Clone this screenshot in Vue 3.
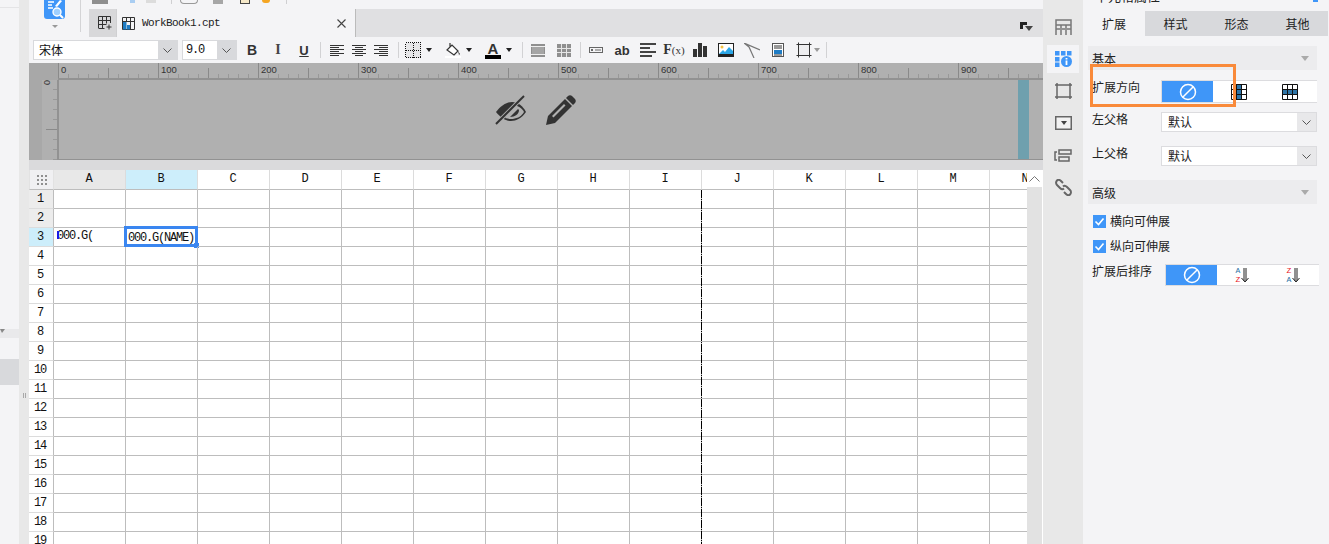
<template>
  <div class="app">
    <aside class="left-panel">
      <div class="left-top"></div>
      <div class="left-drop"><i class="left-caret"></i></div>
      <div class="left-selected"></div>
    </aside>
    <div class="splitter"><span class="grip"></span></div>

    <main class="center">
      <div class="head">
        <div class="logo-col">
          <div class="logo">
            <svg width="21" height="19" viewBox="0 0 21 19">
              <path d="M4 2h6M4 5h4M4 8h5" stroke="#fff" stroke-width="1.6" />
              <path d="M11 6l5-6 2 1-5 6z" fill="#fff" />
              <circle cx="13" cy="12" r="4" fill="#9fd0ff" stroke="#fff" stroke-width="1.4" />
              <path d="M16 15l3 3" stroke="#fff" stroke-width="2" />
            </svg>
          </div>
          <i class="logo-caret"></i>
        </div>
        <div class="head-right">
          <div class="quick">
            <i class="q q-gray"></i>
            <i class="q q-blue"></i>
            <i class="q q-light"></i>
            <i class="q-sep q-sep-a"></i>
            <i class="q q-rings"></i>
            <i class="q q-gray2"></i>
            <i class="q q-beige"></i>
            <i class="q q-orange"></i>
            <i class="q-sep q-sep-b"></i>
          </div>
          <div class="tabs">
            <div class="tab-add">
              <svg width="14" height="14" viewBox="0 0 14 14" fill="none" stroke="#333">
                <path d="M.5 12V.5h12V7M.5 4.500h12M.5 8.500h8M4.500.5v12M8.500.5v7M.5 12.500h6M11 8.500v5M8.500 11h5" />
              </svg>
            </div>
            <div class="tab-file">
              <svg width="13" height="13" viewBox="0 0 13 13" fill="none" stroke="#333">
                <path d="M.5.5h12v12H.5zM.5 4.500h12M8.500.5v12M4.500.5v4" />
                <path d="M1 5h3.500v7.500H1zM5 8h3v4.500H5z" fill="#1f7cc4" stroke="none" />
              </svg>
              <span class="file-name">WorkBook1.cpt</span>
              <span class="file-close">
                <svg width="9" height="9" viewBox="0 0 9 9" stroke="#444" stroke-width="1.100"><path d="M.5.5l8 8M8.500.5l-8 8" /></svg>
              </span>
            </div>
            <div class="tab-spacer"></div>
            <div class="tab-menu">
              <svg width="13" height="10" viewBox="0 0 13 10">
                <path d="M0 0h7v3H3v4H0z" fill="#222" />
                <path d="M5 4h8l-4 5z" fill="#444" />
              </svg>
            </div>
          </div>
        </div>
      </div>

      <div class="toolbar">
        <div class="combo combo-font"><span class="combo-text">宋体</span><span class="combo-arrow"><svg width="9" height="5" viewBox="0 0 9 5" fill="none" stroke="#555"><path d="M.5.500l4 4 4-4" /></svg></span></div>
        <div class="combo combo-size"><span class="combo-text size-text">9.0</span><span class="combo-arrow"><svg width="9" height="5" viewBox="0 0 9 5" fill="none" stroke="#555"><path d="M.5.500l4 4 4-4" /></svg></span></div>

        <div class="t26 first"><b class="t-b">B</b></div>
        <div class="t26"><i class="t-i">I</i></div>
        <div class="t26"><span class="t-u">U</span></div>
        <i class="sep sep-align"></i>
        <div class="t22"><svg width="14" height="11" viewBox="0 0 14 11" stroke="#333"><path d="M0 .5h14M0 2.500h9M0 4.500h14M0 6.500h9M0 8.500h14M0 10.500h9" /></svg></div>
        <div class="t22"><svg width="14" height="11" viewBox="0 0 14 11" stroke="#333"><path d="M0 .5h14M3 2.500h8M0 4.500h14M3 6.500h8M0 8.500h14M3 10.500h8" /></svg></div>
        <div class="t22"><svg width="14" height="11" viewBox="0 0 14 11" stroke="#333"><path d="M0 .5h14M5 2.500h9M0 4.500h14M5 6.500h9M0 8.500h14M5 10.500h9" /></svg></div>
        <i class="sep sep-border"></i>
        <div class="t40">
          <svg width="16" height="16" viewBox="0 0 16 16" fill="none" stroke="#111" stroke-dasharray="1 1" shape-rendering="crispEdges"><rect x=".5" y=".5" width="15" height="15" fill="#e6e6e8" /><path d="M8.500.5v15M.5 8.500h15" /></svg>
          <i class="caret"></i>
        </div>
        <div class="t40">
          <svg width="16" height="16" viewBox="0 0 16 16">
            <path d="M5 1v4M2 8l5-5 6 6-4 4z" fill="#fff" stroke="#333" stroke-width="1.200" />
            <path d="M13 9l2 3-1 1z" fill="#333" />
            <rect x="0" y="14" width="16" height="2" fill="#fff" />
          </svg>
          <i class="caret"></i>
        </div>
        <div class="t40">
          <span class="color-a">A</span>
          <i class="caret"></i>
        </div>
        <i class="sep sep-merge"></i>
        <div class="t26">
          <svg width="14" height="13" viewBox="0 0 14 13"><rect width="14" height="13" fill="#8f8f8f" /><rect x="1" y="3" width="12" height="7" fill="#a5a5a5" /><path d="M0 2.500h14M0 10.500h14" stroke="#eee" /></svg>
        </div>
        <div class="t26">
          <svg width="14" height="13" viewBox="0 0 14 13"><rect width="14" height="13" fill="#8f8f8f" /><path d="M0 4.500h14M0 8.500h14M4.500 0v13M9.500 0v13" stroke="#e6e6e6" /></svg>
        </div>
        <i class="sep sep-insert"></i>
        <div class="t26">
          <svg width="14" height="6" viewBox="0 0 14 6" fill="none" stroke="#666"><rect x=".5" y=".5" width="13" height="5" /><rect x="2" y="2" width="2" height="2" fill="#666" stroke="none" /><path d="M6 3h6" /></svg>
        </div>
        <div class="t26"><span class="t-ab">ab</span></div>
        <div class="t26">
          <svg width="16" height="14" viewBox="0 0 16 14" stroke="#444" stroke-width="2"><path d="M0 1h16M0 5h10M0 9h16M0 13h12" /></svg>
        </div>
        <div class="t26"><span class="t-fx">F<small>(x)</small></span></div>
        <div class="t26">
          <svg width="14" height="14" viewBox="0 0 14 14" fill="#333"><rect y="6" width="4" height="8" /><rect x="5" width="4" height="14" /><rect x="10" y="3" width="4" height="11" /></svg>
        </div>
        <div class="t26">
          <svg width="16" height="14" viewBox="0 0 16 14">
            <rect x=".5" y=".5" width="15" height="13" fill="#fff" stroke="#222" />
            <rect y="11" width="16" height="3" fill="#222" />
            <circle cx="4" cy="4" r="1.500" fill="#f5c242" />
            <path d="M1 11l4-4 2 2 4-5 4 4v3z" fill="#2ba6e6" />
          </svg>
        </div>
        <div class="t26">
          <svg width="16" height="15" viewBox="0 0 16 15" fill="none" stroke="#777" stroke-width="1.200"><path d="M0 0l16 7M0 0l5 4 5 11" /></svg>
        </div>
        <div class="t26">
          <svg width="12" height="14" viewBox="0 0 12 14">
            <rect x=".5" y=".5" width="11" height="13" fill="#fff" stroke="#555" />
            <path d="M2 3h8M2 5h8" stroke="#333" />
            <rect x="2" y="7" width="8" height="4" fill="#1f7cc4" />
            <path d="M2 12h8" stroke="#333" />
          </svg>
        </div>
        <div class="t35">
          <svg width="16" height="16" viewBox="0 0 16 16" fill="#ededef" stroke="#333"><path d="M2.500 2.500h11v11h-11z" /><path d="M.5 2.500h15M.5 13.500h15M2.500.5v15M13.500.5v15" fill="none" /></svg>
          <i class="caret caret-gray"></i>
        </div>
        <i class="sep"></i>
      </div>

      <section class="ruler">
        <div class="ruler-top">
          <div class="ruler-corner"></div>
          <div class="ruler-h">
            <span v-for="n in rulerLabels" :key="n" class="ruler-num">{{ n }}</span>
          </div>
        </div>
        <div class="ruler-body">
          <div class="ruler-side"></div>
          <div class="ruler-v"><span class="ruler-zero">0</span></div>
          <div class="ruler-canvas">
            <svg class="eye" width="32" height="30" viewBox="1 0 30 30">
              <path d="M1 17C6 10 12 7 17 7c6 0 11 4 14 10-4 6-10 9-15 9-6 0-11-4-15-9z" fill="#333" />
              <path d="M18 10c4 0 9 3 11 7-3 5-8 7-13 7-2 0-4-.5-6-1z" fill="#b0b0b0" />
              <path d="M24 15c0 4-4 7-9 7l8-8z" fill="#333" />
              <path d="M1 29L29 1" stroke="#b0b0b0" stroke-width="4" />
              <path d="M1 29L29 1" stroke="#333" stroke-width="2" />
            </svg>
            <svg class="pencil" width="30" height="30" viewBox="0 0 30 30" fill="#333">
              <path d="M0 30l2-9L19 4l7 7L9 28z" />
              <path d="M20 3l2-2c1-1 3-1 4 0l3 3c1 1 1 3 0 4l-2 2z" />
              <path d="M6 21l12-12 1.500 1.500-12 12z" fill="#b0b0b0" />
            </svg>
          </div>
          <div class="teal"></div>
        </div>
      </section>

      <div class="gap-bar"></div>

      <section class="sheet">
        <div class="grid-wrap">
          <div class="grid">
            <div class="corner"><i class="dots"></i></div>
            <div
              v-for="c in cols"
              :key="c"
              class="col-head"
              :class="{ 'col-a': c === 'A', 'col-b': c === 'B' }"
            >{{ c }}</div>
            <template v-for="r in 19" :key="r">
              <div class="row-head" :class="{ 'row-gray': r < 3, 'row-sel': r === 3 }">{{ r }}</div>
              <div v-for="c in cols" :key="c + r" class="cell">
                <template v-if="r === 3 && c === 'A'">
                  <span class="cell-text a3">000.G(</span>
                  <i class="drag-mark"></i>
                </template>
                <template v-if="r === 3 && c === 'B'">
                  <span class="cell-text">000.G(NAME)</span>
                  <div class="sel-box"><i class="sel-handle"></i></div>
                </template>
              </div>
            </template>
          </div>
          <div class="page-break"></div>
        </div>
        <div class="vbar">
          <div class="vbar-up">
            <svg width="11" height="6" viewBox="0 0 11 6" fill="none" stroke="#777"><path d="M.5 5.500l5-5 5 5" /></svg>
          </div>
          <div class="vbar-track"></div>
        </div>
      </section>
    </main>

    <nav class="icon-col">
      <div class="side-btn">
        <svg width="17" height="16" viewBox="0 0 17 16" fill="none" stroke="#777" stroke-width="1.500"><path d="M1 16V1h15v15M1 6h15M1 10h4M7 10h3M12 10h4M6 6v10M11 6v10" /></svg>
      </div>
      <div class="side-btn active">
        <svg width="17" height="16" viewBox="0 0 17 16">
          <g fill="#3f96f8">
            <rect width="4.500" height="4.500" /><rect x="6" width="4.500" height="4.500" /><rect x="12" width="4.500" height="4.500" />
            <rect y="6" width="4.500" height="4.500" /><rect y="11.500" width="4.500" height="4.500" />
            <circle cx="11.500" cy="10.500" r="5.500" />
          </g>
          <path d="M11.500 7v1.500M11.500 9.500V14" stroke="#fff" stroke-width="1.800" />
        </svg>
      </div>
      <div class="side-btn">
        <svg width="17" height="16" viewBox="0 0 17 16" fill="none" stroke="#666" stroke-width="1.500"><path d="M0 2h17M0 14h17M2 0v16M15 0v16" /></svg>
      </div>
      <div class="side-btn">
        <svg width="17" height="14" viewBox="0 0 17 14"><rect x=".75" y=".75" width="15.500" height="12.500" fill="#f2f2f2" stroke="#666" stroke-width="1.500" /><path d="M6 5h6l-3 4z" fill="#444" /></svg>
      </div>
      <div class="side-btn">
        <svg width="18" height="13" viewBox="0 0 18 13" fill="none" stroke="#666" stroke-width="1.500"><path d="M3 3H1v8h2" /><rect x="5" y="1" width="12" height="4" /><rect x="5" y="8" width="10" height="4" /></svg>
      </div>
      <div class="side-btn">
        <svg width="17" height="17" viewBox="0 0 17 17" fill="none" stroke="#666" stroke-width="2">
          <path d="M8 4L6 2C4.500.5 3 .5 2 1.500S.5 4.500 2 6l3 3c1.500 1.500 3 1.500 4 .5" />
          <path d="M9 13l2 2c1.500 1.500 3 1.500 4 .5s1.500-3 0-4.500l-3-3c-1.500-1.500-3-1.500-4-.5" />
        </svg>
      </div>
    </nav>

    <aside class="props">
      <div class="props-title"><span>单元格属性</span><i class="title-mark"></i></div>
      <div class="props-tabs">
        <div class="p-tab on">扩展</div>
        <div class="p-tab">样式</div>
        <div class="p-tab">形态</div>
        <div class="p-tab">其他</div>
      </div>

      <div class="group-bar first-bar"><span>基本</span><i class="bar-caret"></i></div>

      <div class="form-row dir-row">
        <label class="lbl">扩展方向</label>
        <div class="seg">
          <div class="seg-item on"><svg width="18" height="18" viewBox="0 0 18 18" fill="none" stroke="#fff" stroke-width="1.500"><circle cx="9" cy="9" r="7.500" /><path d="M3.700 14.300L14.300 3.700" /></svg></div>
          <div class="seg-item">
            <svg width="16" height="16" viewBox="0 0 16 16"><rect x="5.500" y="0" width="5" height="16" fill="#2d74a6" /><path d="M.5.5h15v15H.5zM5.500.5v15M10.500.5v15M.5 5.500h15M.5 10.500h15" fill="none" stroke="#111" /></svg>
          </div>
          <div class="seg-item">
            <svg width="16" height="16" viewBox="0 0 16 16"><rect x="0" y="5.500" width="16" height="5" fill="#2d74a6" /><path d="M.5.5h15v15H.5zM5.500.5v15M10.500.5v15M.5 5.500h15M.5 10.500h15" fill="none" stroke="#111" /></svg>
          </div>
        </div>
      </div>

      <div class="form-row left-row">
        <label class="lbl">左父格</label>
        <div class="p-select"><span>默认</span><span class="p-arrow"><svg width="9" height="5" viewBox="0 0 9 5" fill="none" stroke="#555"><path d="M.5.500l4 4 4-4" /></svg></span></div>
      </div>
      <div class="form-row up-row">
        <label class="lbl">上父格</label>
        <div class="p-select"><span>默认</span><span class="p-arrow"><svg width="9" height="5" viewBox="0 0 9 5" fill="none" stroke="#555"><path d="M.5.500l4 4 4-4" /></svg></span></div>
      </div>

      <div class="group-bar adv-bar"><span>高级</span><i class="bar-caret"></i></div>

      <div class="check check-a">
        <span class="box"><svg width="13" height="13" viewBox="0 0 13 13" fill="none" stroke="#fff" stroke-width="1.600"><path d="M2.500 6.500l3 3 5-6" /></svg></span><span class="check-text">横向可伸展</span>
      </div>
      <div class="check check-b">
        <span class="box"><svg width="13" height="13" viewBox="0 0 13 13" fill="none" stroke="#fff" stroke-width="1.600"><path d="M2.500 6.500l3 3 5-6" /></svg></span><span class="check-text">纵向可伸展</span>
      </div>

      <div class="form-row sort-row">
        <label class="lbl">扩展后排序</label>
        <div class="seg seg-sort">
          <div class="seg-item on"><svg width="18" height="18" viewBox="0 0 18 18" fill="none" stroke="#fff" stroke-width="1.500"><circle cx="9" cy="9" r="7.500" /><path d="M3.700 14.300L14.300 3.700" /></svg></div>
          <div class="seg-item">
            <span class="az"><span class="az-blue">A</span><span class="az-red">Z</span></span>
            <svg width="8" height="15" viewBox="0 0 8 15" fill="none" stroke="#222"><path d="M3 0v13M5 0v13M.5 10L4 14l3.500-4" /></svg>
          </div>
          <div class="seg-item">
            <span class="az"><span class="az-red">Z</span><span class="az-blue">A</span></span>
            <svg width="8" height="15" viewBox="0 0 8 15" fill="none" stroke="#222"><path d="M3 0v13M5 0v13M.5 10L4 14l3.500-4" /></svg>
          </div>
        </div>
      </div>

      <div class="annotation"></div>
    </aside>
  </div>
</template>

<script setup>
const cols = ['A', 'B', 'C', 'D', 'E', 'F', 'G', 'H', 'I', 'J', 'K', 'L', 'M', 'N']
const rulerLabels = [0, 100, 200, 300, 400, 500, 600, 700, 800, 900]
</script>

<style>
html, body {
  margin: 0;
  overflow: hidden;
  background: #f4f4f6;
}
</style>

<style scoped>
.app {
  display: flex;
  width: 1329px;
  height: 544px;
  overflow: hidden;
  background: #f4f4f6;
  color: #222;
  font-family: "Noto Sans CJK SC", "Liberation Sans", sans-serif;
  font-size: 12px;
}
.app i { font-style: normal; display: block; }

/* left side */
.left-panel { width: 19px; flex: none; }
.left-top { height: 7px; border-bottom: 1px solid #e4e4e6; }
.left-drop { height: 9px; margin-top: 321px; background: #e9e9eb; }
.left-caret {
  width: 0;
  border: 3px solid transparent;
  border-top: 4px solid #888;
  border-left-width: 2px;
  margin-top: 3px;
}
.left-selected { height: 26px; margin-top: 21px; background: #d8d9dc; }
.splitter {
  width: 10px;
  flex: none;
  background: #e8e8e8;
  display: flex;
  justify-content: center;
  padding-top: 393px;
  box-sizing: border-box;
}
.grip {
  width: 1px;
  height: 5px;
  border-left: 1px solid #a8a8a8;
  border-right: 1px solid #a8a8a8;
}

/* center */
.center { width: 1014px; flex: none; display: flex; flex-direction: column; }
.head { height: 37px; display: flex; flex: none; }
.logo-col {
  width: 60px;
  flex: none;
  position: relative;
  padding-left: 15px;
  box-sizing: border-box;
}
.logo-col::after {
  content: "";
  position: absolute;
  left: 51px;
  top: 0;
  height: 32px;
  border-left: 1px solid #d4d4d6;
}
.logo {
  width: 21px;
  height: 19px;
  background: #3f96f8;
  border-radius: 0 0 3px 3px;
}
.logo svg { display: block; }
.logo-caret {
  width: 0;
  margin: 6px 0 0 8px;
  border: 3px solid transparent;
  border-top: 3px solid #999;
}
.head-right { flex: 1; display: flex; flex-direction: column; min-width: 0; }
.quick { height: 9px; display: flex; align-items: flex-start; flex: none; }
.q { height: 4px; flex: none; }
.q-gray { width: 16px; margin-left: 3px; background: #8e8e8e; }
.q-blue { width: 5px; height: 3px; margin-left: 22px; background: #a9cdf2; }
.q-light { width: 10px; height: 3px; margin-left: 11px; background: #dcdcdc; }
.q-sep { width: 1px; height: 4px; background: #cfcfd1; }
.q-sep-a { margin-left: 15px; }
.q-rings {
  width: 16px;
  height: 3px;
  margin-left: 8px;
  border: 1px solid #999;
  border-top: none;
  box-sizing: content-box;
  border-radius: 0 0 4px 4px;
}
.q-gray2 { width: 10px; margin-left: 15px; background: #a6a6a6; }
.q-beige {
  width: 8px;
  height: 3px;
  margin-left: 17px;
  background: #f5e8c8;
  border: 1px solid #444;
  border-top: none;
}
.q-orange { width: 8px; height: 3px; margin-left: 12px; background: #f5a623; border-radius: 0 0 4px 4px; }
.q-sep-b { margin-left: 16px; }

.tabs { height: 28px; display: flex; background: #e0e0e2; flex: none; }
.tab-add {
  width: 27px;
  background: #d8d8da;
  padding: 7px 0 0 9px;
  box-sizing: border-box;
  flex: none;
}
.tab-add svg, .tab-file svg { display: block; }
.tab-file {
  width: 240px;
  flex: none;
  background: #f4f4f6;
  border-right: 1px solid #bbb;
  border-left: 1px solid #d0d0d2;
  box-sizing: border-box;
  display: flex;
  align-items: center;
  padding: 0 7px 0 5px;
}
.file-name {
  margin-left: 7px;
  font-family: "Liberation Mono", monospace;
  font-size: 11px;
  letter-spacing: -0.6px;
  color: #222;
}
.file-close { margin-left: auto; margin-right: 2px; }
.tab-spacer { flex: 1; }
.tab-menu {
  width: 23px;
  flex: none;
  padding-top: 9px;
  box-sizing: border-box;
}

.toolbar {
  height: 26px;
  flex: none;
  display: flex;
  align-items: center;
  padding-left: 4px;
  background: #f4f4f6;
}
.combo {
  height: 20px;
  display: flex;
  background: #fff;
  border: 1px solid #d8d9dc;
  box-sizing: border-box;
  flex: none;
}
.combo-font { width: 145px; }
.combo-size { width: 55px; margin-left: 4px; }
.combo-text { flex: 1; padding-left: 5px; font-size: 12px; line-height: 18px; color: #111; }
.size-text { font-family: "Liberation Mono", monospace; font-size: 12px; letter-spacing: -1.2px; padding-left: 3px; }
.combo-arrow {
  width: 19px;
  background: #d8d9dc;
  display: flex;
  align-items: center;
  justify-content: center;
}
.t26, .t22, .t40, .t35 {
  height: 26px;
  display: flex;
  align-items: center;
  justify-content: center;
  flex: none;
}
.t26 { width: 26px; }
.t26.first { margin-left: 2px; }
.t22 { width: 22px; }
.t40 { width: 40px; justify-content: flex-start; padding-left: 4px; box-sizing: border-box; gap: 5px; }
.t35 { width: 35px; justify-content: flex-start; padding-left: 5px; box-sizing: border-box; gap: 0; }
.sep { width: 1px; height: 16px; background: #d2d2d4; flex: none; }
.sep-align { margin: 0 5px 0 3px; }
.sep-border { margin: 0 2px 0 6px; }
.sep-merge { margin: 0 2px 0 1px; }
.sep-insert { margin: 0 2px 0 3px; }
.caret {
  width: 0;
  border: 3px solid transparent;
  border-top: 4px solid #222;
  border-bottom: none;
}
.caret-gray { border-top-color: #999; margin-left: 2px; }
.t-b { font: bold 14px "Liberation Sans", sans-serif; color: #333; }
.t-i { font: italic bold 14px "Liberation Serif", serif; color: #444; }
.t-u { font: bold 13px "Liberation Sans", sans-serif; color: #333; text-decoration: underline; }
.t-ab { font: bold 13px "Liberation Sans", sans-serif; color: #333; }
.t-fx { font: bold 14px "Liberation Serif", serif; color: #333; }
.t-fx small { font-size: 11px; font-weight: normal; }
.color-a {
  width: 16px;
  font: bold 15px/13px "Liberation Sans", sans-serif;
  color: #333;
  text-align: center;
  border-bottom: 4px solid #000;
}

/* ruler */
.ruler { height: 97px; flex: none; background: #b0b0b0; display: flex; flex-direction: column; }
.ruler-top { height: 17px; flex: none; display: flex; }
.ruler-corner { width: 29px; flex: none; background: #a8a8a8; border-bottom: 2px solid #a8a8a8; box-sizing: border-box; }
.ruler-h {
  flex: 1;
  display: flex;
  overflow: hidden;
  box-sizing: border-box;
  border-bottom: 2px solid #929292;
  background-color: #b0b0b0;
  background-image:
    repeating-linear-gradient(90deg, #8a8a8a 0 1px, transparent 1px 100px),
    repeating-linear-gradient(90deg, #8a8a8a 0 1px, transparent 1px 50px),
    repeating-linear-gradient(90deg, #999 0 1px, transparent 1px 10px);
  background-repeat: no-repeat;
  background-size: 100% 15px, 100% 10px, 100% 4px;
  background-position: 0 0, 0 5px, 0 11px;
}
.ruler-num {
  width: 100px;
  flex: none;
  padding-left: 3px;
  box-sizing: border-box;
  font: 9.500px/14px "Liberation Sans", sans-serif;
  color: #333;
}
.ruler-body { flex: 1; display: flex; position: relative; }
.ruler-side { width: 13px; flex: none; background: #a8a8a8; }
.ruler-v {
  width: 17px;
  flex: none;
  box-sizing: border-box;
  border-right: 2px solid #929292;
  position: relative;
  background-image:
    repeating-linear-gradient(180deg, transparent 0 49px, #8a8a8a 49px 50px),
    repeating-linear-gradient(180deg, transparent 0 9px, #999 9px 10px);
  background-repeat: no-repeat;
  background-size: 11px 100%, 4px 100%;
  background-position: right 0 top 0, right 0 top 0;
}
.ruler-zero {
  display: block;
  width: 8px;
  font: 9px/8px "Liberation Sans", sans-serif;
  color: #333;
  transform: rotate(90deg);
  margin: 0 0 0 1px;
}
.ruler-canvas {
  flex: 1;
  display: flex;
  align-items: flex-start;
  padding: 15px 0 0 436px;
  gap: 19px;
  border-bottom: 1px solid #929292;
}
.teal {
  position: absolute;
  left: 989px;
  top: 0;
  bottom: 1px;
  width: 11px;
  background: #6fa0ae;
}
.gap-bar { height: 10px; flex: none; background: #dadadc; }

/* sheet */
.sheet { flex: 1; display: flex; min-height: 0; background: #fff; }
.grid-wrap { width: 998px; flex: none; overflow: hidden; position: relative; }
.grid {
  display: grid;
  grid-template-columns: 25px repeat(14, 72px);
  grid-template-rows: 20px repeat(19, 19px);
  width: 1033px;
}
.corner {
  background: #f0f0f2;
  border-right: 1px solid #e2e2e2;
  border-bottom: 1px solid #bdbdbd;
  border-left: 1px solid #e2e2e2;
  display: flex;
  align-items: center;
  justify-content: center;
}
.dots {
  width: 2px;
  height: 2px;
  background: #8f8f8f;
  box-shadow: 4px 0 #8f8f8f, 8px 0 #8f8f8f, 0 4px #8f8f8f, 4px 4px #8f8f8f, 8px 4px #8f8f8f, 0 8px #8f8f8f, 4px 8px #8f8f8f, 8px 8px #8f8f8f;
  transform: translate(-4px, -4px);
}
.col-head {
  background: #fff;
  border-right: 1px solid #dcdcdc;
  border-bottom: 1px solid #bdbdbd;
  box-sizing: border-box;
  padding-right: 2px;
  text-align: center;
  font: 12px/19px "Liberation Mono", monospace;
  letter-spacing: -1.200px;
  color: #111;
}
.col-a { background: #e8e8e8; }
.col-b { background: #cdeefb; }
.row-head {
  background: #fff;
  border-right: 1px solid #bdbdbd;
  border-bottom: 1px solid #dcdcdc;
  box-sizing: border-box;
  padding-right: 2px;
  text-align: center;
  font: 12px/19px "Liberation Mono", monospace;
  letter-spacing: -1.200px;
  color: #111;
}
.row-gray { background: #ececec; }
.row-sel { background: #cdeefb; }
.cell {
  position: relative;
  border-right: 1px solid #bdbdbd;
  border-bottom: 1px solid #bdbdbd;
  min-width: 0;
}
.cell-text {
  display: block;
  padding: 0 0 0 2px;
  font: 12px/20px "Liberation Mono", monospace;
  letter-spacing: -1.200px;
  color: #111;
  white-space: nowrap;
}
.a3 { padding-left: 3px; line-height: 17px; }
.drag-mark {
  position: absolute;
  left: 3px;
  top: 3px;
  width: 2px;
  height: 8px;
  background: #1a1ae6;
}
.sel-box {
  position: absolute;
  left: -2px;
  right: -1px;
  top: -2px;
  bottom: -1px;
  border: 3px solid #3a86f0;
}
.sel-handle {
  position: absolute;
  right: -4px;
  bottom: -4px;
  width: 5px;
  height: 5px;
  background: #3a86f0;
}
.page-break {
  position: absolute;
  left: 672px;
  top: 20px;
  bottom: 0;
  width: 1px;
  background: repeating-linear-gradient(180deg, #000 0 8px, #bdbdbd 8px 9px, #000 9px 10px, #bdbdbd 10px 11px);
}
.vbar { width: 16px; flex: none; display: flex; flex-direction: column; }
.vbar-up {
  height: 17px;
  flex: none;
  display: flex;
  align-items: center;
  justify-content: center;
  width: 15px;
  background: #fff;
}
.vbar-track { flex: 1; width: 15px; background: #e2e2e2; }

/* right icon strip */
.icon-col {
  width: 40px;
  flex: none;
  background: #e8e8e8;
  padding: 13px 4px 0;
  box-sizing: border-box;
  display: flex;
  flex-direction: column;
  gap: 4px;
}
.side-btn {
  height: 28px;
  display: flex;
  align-items: center;
  justify-content: center;
  flex: none;
}
.side-btn.active { background: #f4f4f6; }

/* property panel */
.props {
  width: 246px;
  flex: none;
  position: relative;
  background: #f4f4f6;
  box-sizing: border-box;
}
.props-title {
  height: 11px;
  overflow: hidden;
  padding-left: 12px;
  display: flex;
  justify-content: space-between;
  line-height: 14px;
  font-size: 13px;
}
.props-title span { margin-top: -11px; }
.title-mark { width: 5px; height: 2px; margin-right: 11px; background: #3f96f8; }
.props-tabs { height: 25px; display: flex; width: 245px; }
.p-tab {
  width: 61px;
  flex: none;
  background: #d8d9dc;
  text-align: center;
  font-size: 12px;
  line-height: 25px;
}
.p-tab.on { width: 62px; background: #f4f4f6; }
.group-bar {
  height: 24px;
  margin: 0 12px 0 5px;
  padding: 0 8px 0 4px;
  background: #ececee;
  display: flex;
  align-items: center;
  justify-content: space-between;
  font-size: 12px;
}
.first-bar { margin-top: 10px; }
.adv-bar { margin-top: 14px; }
.bar-caret {
  width: 0;
  border: 4px solid transparent;
  border-top: 5px solid #aaa;
  border-bottom: none;
}
.form-row { display: flex; align-items: flex-start; margin: 0 12px 0 9px; }
.lbl { width: 69px; flex: none; font-size: 12px; line-height: 14px; }
.dir-row { margin-top: 10px; }
.left-row { margin-top: 9px; }
.up-row { margin-top: 14px; }
.sort-row { margin-top: 11px; }
.sort-row .lbl { width: 73px; }
.seg {
  flex: 1;
  height: 23px;
  display: flex;
  background: #fff;
  border: 1px solid #dcdcdf;
  border-right: none;
  box-sizing: border-box;
}
.seg-sort { height: 22px; }
.seg-item {
  width: 51px;
  display: flex;
  align-items: center;
  justify-content: center;
  flex: none;
}
.seg-item.on { background: #3f96f8; }
.p-select {
  flex: 1;
  height: 20px;
  display: flex;
  justify-content: space-between;
  background: #fff;
  border: 1px solid #dcdcdf;
  box-sizing: border-box;
  padding-left: 6px;
  font-size: 12px;
  line-height: 18px;
}
.p-arrow {
  width: 19px;
  background: #e8e8ea;
  display: flex;
  align-items: center;
  justify-content: center;
}
.check { display: flex; align-items: flex-start; margin-left: 10px; height: 13px; font-size: 12px; gap: 4px; }
.check-a { margin-top: 11px; }
.check-b { margin-top: 12px; }
.check-text { line-height: 12px; }
.box { width: 13px; height: 13px; background: #3f96f8; display: block; flex: none; }
.box svg { display: block; }
.az {
  display: flex;
  flex-direction: column;
  gap: 1px;
  font: 8px/8px "Liberation Mono", monospace;
  margin-right: 1px;
}
.az-blue { color: #2d74a6; }
.az-red { color: #e8131d; }
.annotation {
  position: absolute;
  left: 7px;
  top: 64px;
  width: 146px;
  height: 43px;
  box-sizing: border-box;
  border: 3px solid #f98a3a;
  pointer-events: none;
}
</style>
